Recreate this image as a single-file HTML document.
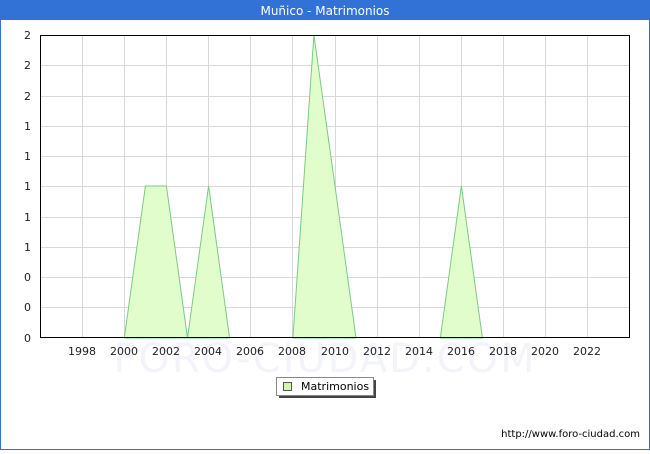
<!DOCTYPE html>
<html><head><meta charset="utf-8"><style>
body{margin:0;width:650px;height:450px;overflow:hidden;background:#fff;font-family:"DejaVu Sans","Liberation Sans",sans-serif}
</style></head><body>
<svg width="650" height="450" xmlns="http://www.w3.org/2000/svg" font-family="DejaVu Sans, Liberation Sans, sans-serif">
<rect x="0.5" y="0.5" width="649" height="449" fill="#fff" stroke="#3272d6"/>
<rect x="0" y="0" width="650" height="20" fill="#3272d6"/>
<text x="325" y="15" fill="#fff" font-size="12" text-anchor="middle">Muñico - Matrimonios</text>
<g stroke="#d8d8d8" stroke-width="1">
<line x1="40" x2="630" y1="65.5" y2="65.5"/><line x1="40" x2="630" y1="96.5" y2="96.5"/><line x1="40" x2="630" y1="126.5" y2="126.5"/><line x1="40" x2="630" y1="156.5" y2="156.5"/><line x1="40" x2="630" y1="186.5" y2="186.5"/><line x1="40" x2="630" y1="217.5" y2="217.5"/><line x1="40" x2="630" y1="247.5" y2="247.5"/><line x1="40" x2="630" y1="277.5" y2="277.5"/><line x1="40" x2="630" y1="307.5" y2="307.5"/>
<line y1="35" y2="338" x1="82.5" x2="82.5"/><line y1="35" y2="338" x1="124.5" x2="124.5"/><line y1="35" y2="338" x1="166.5" x2="166.5"/><line y1="35" y2="338" x1="208.5" x2="208.5"/><line y1="35" y2="338" x1="250.5" x2="250.5"/><line y1="35" y2="338" x1="292.5" x2="292.5"/><line y1="35" y2="338" x1="335.5" x2="335.5"/><line y1="35" y2="338" x1="377.5" x2="377.5"/><line y1="35" y2="338" x1="419.5" x2="419.5"/><line y1="35" y2="338" x1="461.5" x2="461.5"/><line y1="35" y2="338" x1="503.5" x2="503.5"/><line y1="35" y2="338" x1="545.5" x2="545.5"/><line y1="35" y2="338" x1="587.5" x2="587.5"/>
</g>
<text x="325" y="372" font-size="40" fill="#f3f4fa" text-anchor="middle" letter-spacing="2">FORO-CIUDAD.COM</text>
<g fill="#e2fdcc" stroke="#7dc986" stroke-width="1">
<polygon points="124.3,338 145.4,186 166.4,186 187.5,338 208.6,186 229.6,338"/>
<polygon points="292.9,338 313.9,35 335,186 356,338"/>
<polygon points="440.3,338 461.4,186 482.4,338"/>
</g>
<rect x="40.5" y="35.5" width="589" height="302" fill="none" stroke="#000"/>
<g font-size="11" fill="#222" text-anchor="end">
<text x="31" y="39">2</text><text x="31" y="69">2</text><text x="31" y="100">2</text><text x="31" y="130">1</text><text x="31" y="160">1</text><text x="31" y="190">1</text><text x="31" y="221">1</text><text x="31" y="251">1</text><text x="31" y="281">0</text><text x="31" y="311">0</text><text x="31" y="342">0</text>
</g>
<g font-size="11" fill="#222" text-anchor="middle">
<text x="82" y="355">1998</text><text x="124" y="355">2000</text><text x="166" y="355">2002</text><text x="208" y="355">2004</text><text x="250" y="355">2006</text><text x="292" y="355">2008</text><text x="335" y="355">2010</text><text x="377" y="355">2012</text><text x="419" y="355">2014</text><text x="461" y="355">2016</text><text x="503" y="355">2018</text><text x="545" y="355">2020</text><text x="587" y="355">2022</text>
</g>
<rect x="279" y="380" width="97" height="18" fill="#444"/>
<rect x="276.5" y="377.5" width="97" height="18" fill="#fff" stroke="#888"/>
<rect x="283.5" y="382.5" width="8" height="8" fill="#d6f5b0" stroke="#555"/>
<text x="301" y="390" font-size="11" fill="#000">Matrimonios</text>
<text x="640" y="437" font-size="10" fill="#000" text-anchor="end">http://www.foro-ciudad.com</text>
</svg>
</body></html>
